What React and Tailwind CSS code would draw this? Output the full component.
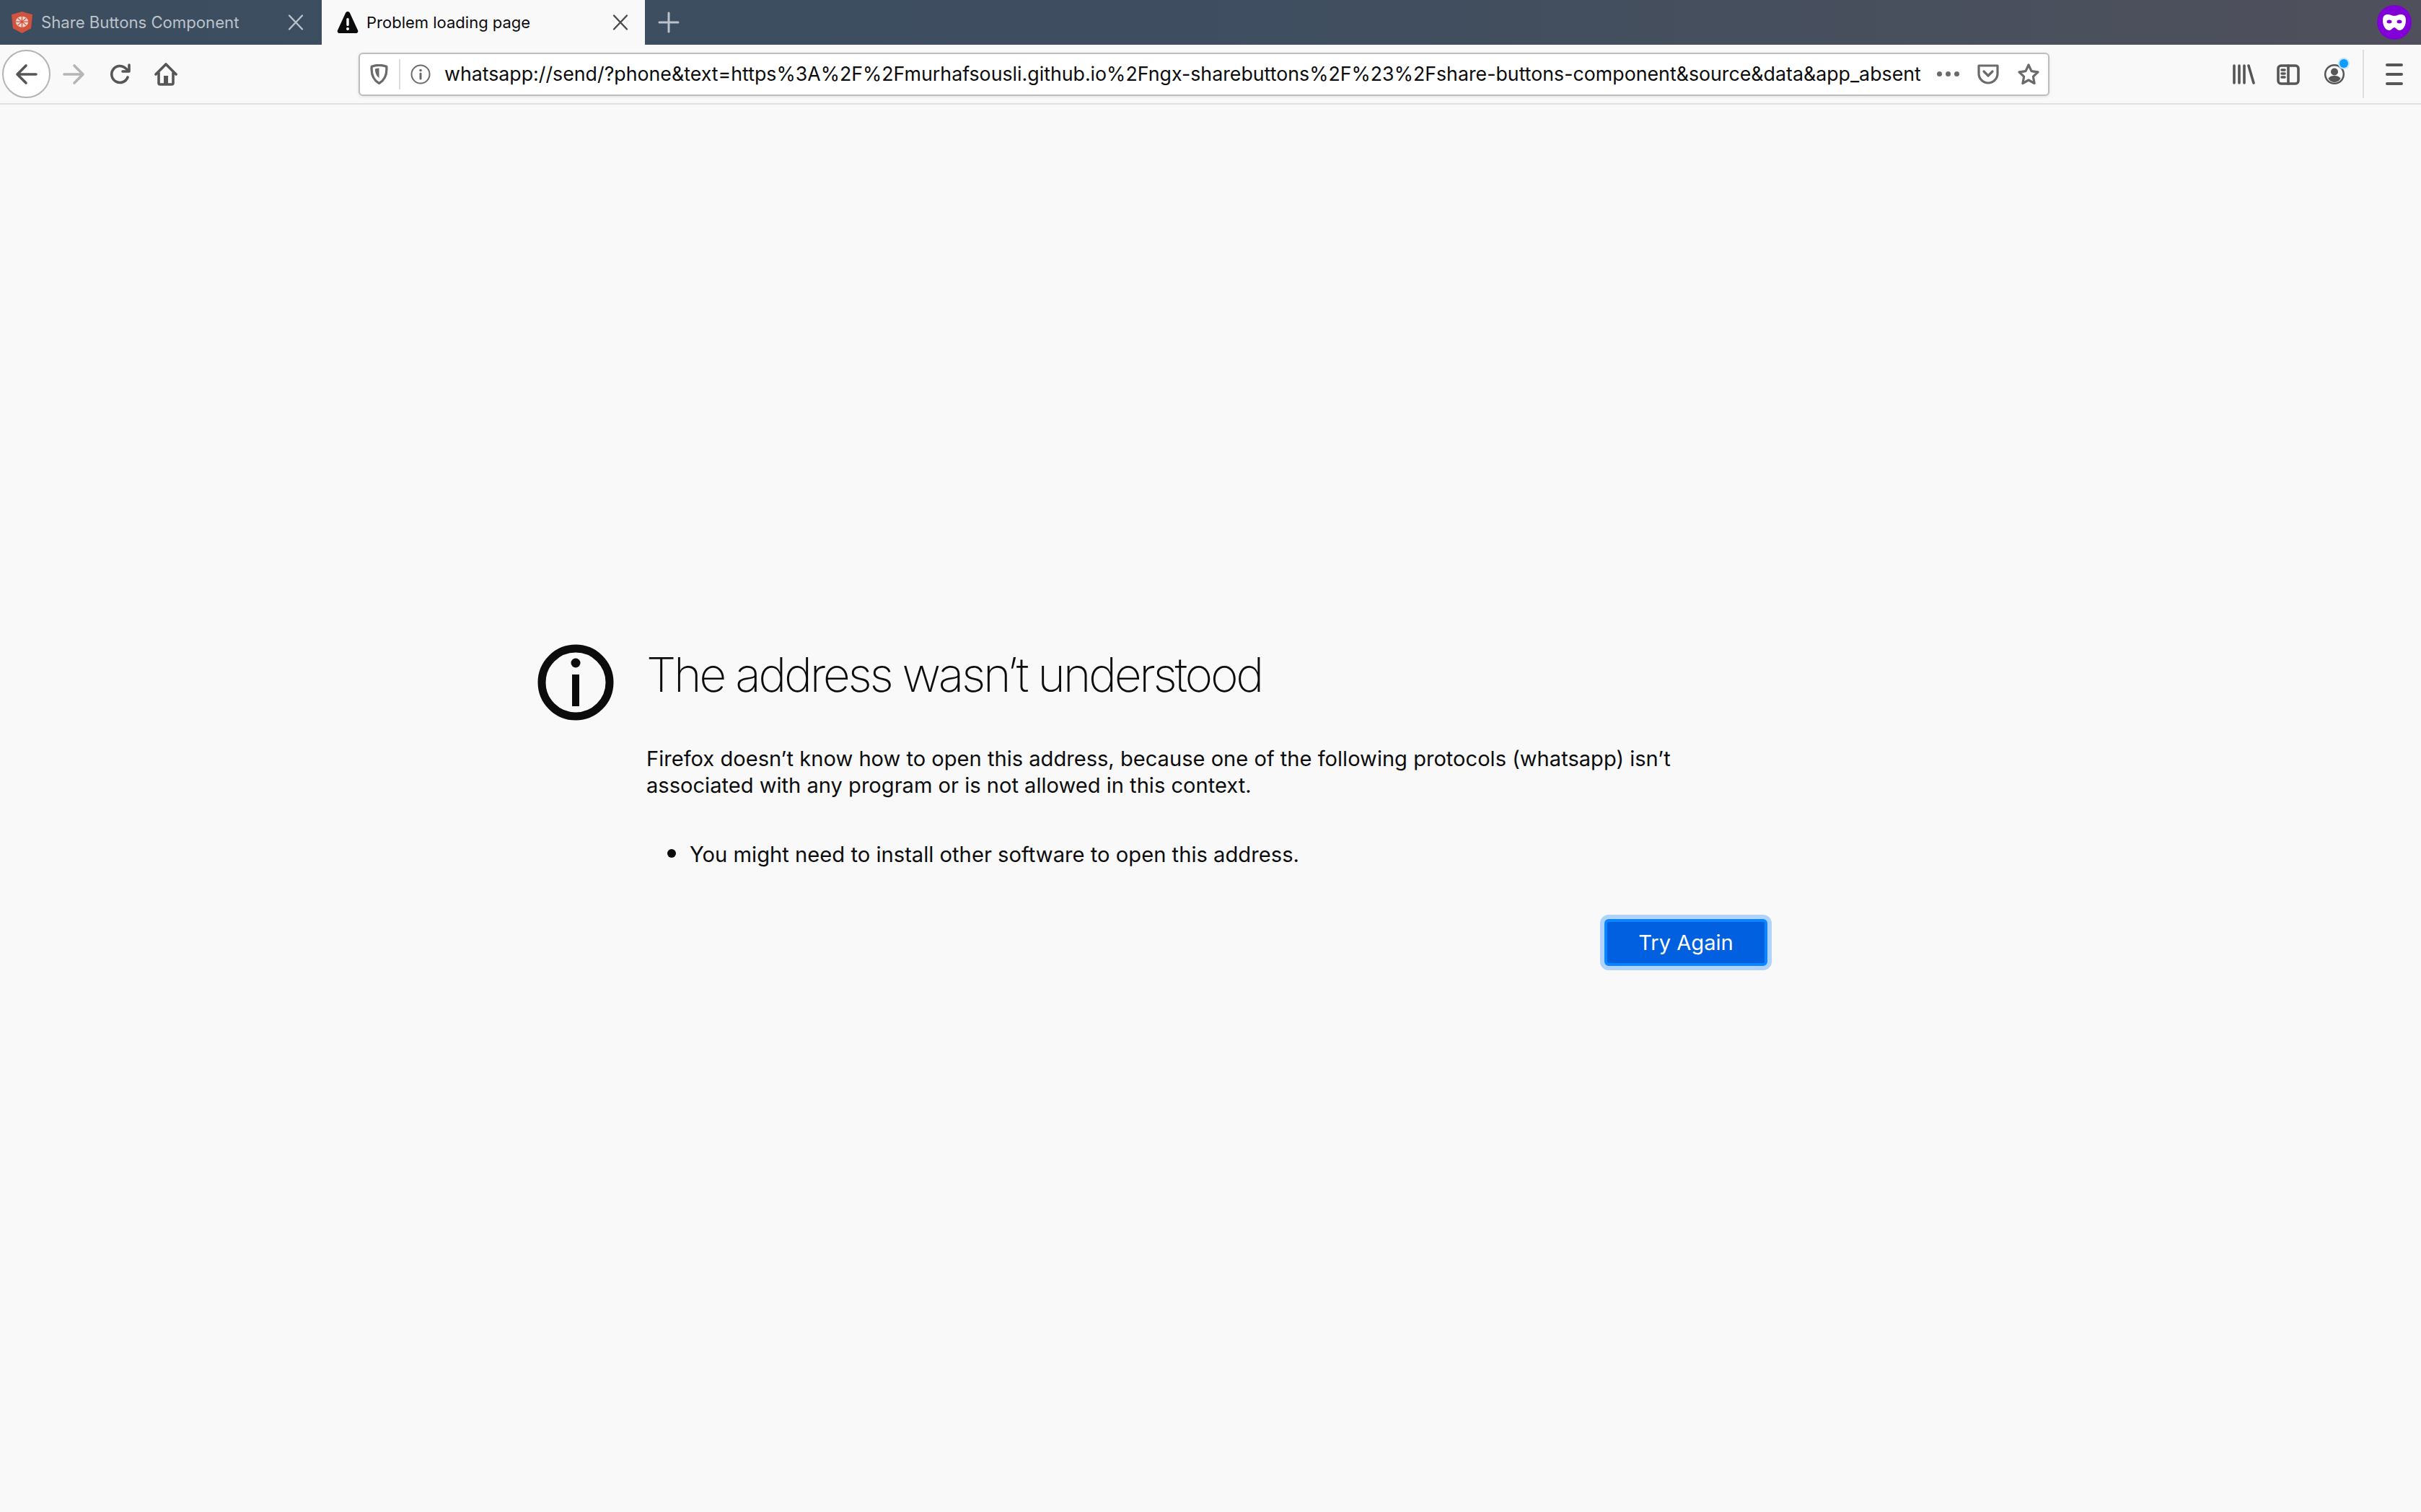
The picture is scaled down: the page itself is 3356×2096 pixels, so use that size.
const sans = 'font-["Inter","Liberation_Sans",sans-serif]';

function CloseIcon({ className = '' }) {
    return (
        <svg viewBox="0 0 24 24" className={`h-6 w-6 ${className}`} fill="none" stroke="currentColor" strokeWidth="2.4" strokeLinecap="round">
            <path d="M3 2.5 21 21.5M21 2.5 3 21.5" />
        </svg>
    );
}

function ToolIcon({ children, className = '', weight = '3.6' }) {
    return (
        <svg viewBox="0 0 32 32" className={`h-8 w-8 ${className}`} fill="none" stroke="currentColor" strokeWidth={weight} strokeLinecap="round" strokeLinejoin="round">
            {children}
        </svg>
    );
}

function TabBar() {
    return (
        <div className="flex h-[62px] bg-gradient-to-r from-[#3c4d60] via-[#3e4e60] to-[#4f505b]">
            <div className="flex w-[446px] items-center pl-[15px] pr-[24px] text-[#bcc2c9]">
                <svg viewBox="0 0 32 36" preserveAspectRatio="none" className="h-[30px] w-[31px]">
                    <path d="M16 0 31 5l-2 23-13 8-13-8L1 5z" fill="#d0533d" />
                    <circle cx="16" cy="17" r="9" fill="#f3d6cf" />
                    <path d="M7 17h18M16 8v18M10 11l12 12M22 11 10 23" stroke="#d0533d" strokeWidth="1.4" />
                </svg>
                <span className="ml-[11px] flex-1 text-[22.150px] leading-none">Share Buttons Component</span>
                <CloseIcon />
            </div>
            <div className="flex w-[448px] items-center bg-[#f9f9fa] pl-[20px] pr-[22px] text-[#0c0c0d]">
                <svg viewBox="0 0 32 32" className="h-[32px] w-[32px]">
                    <path d="M16 1c1.4 0 2.4.8 3 2l11 24c.9 2-.4 4-2.6 4H4.6C2.400 31 1.100 29 2 27L13 3c.6-1.200 1.600-2 3-2z" fill="#0c0c0d" />
                    <rect x="14.300" y="10" width="3.400" height="11" rx="1.500" fill="#fff" />
                    <circle cx="16" cy="25" r="2" fill="#fff" />
                </svg>
                <span className="ml-[10px] flex-1 text-[22px] leading-none">Problem loading page</span>
                <CloseIcon className="text-[#4a4a4f]" />
            </div>
            <div className="flex flex-1 items-center justify-between pl-[18px] pr-[13px]">
                <svg viewBox="0 0 30 30" className="h-[30px] w-[30px] text-[#bcc2c9]" fill="none" stroke="currentColor" strokeWidth="3" strokeLinecap="round">
                    <path d="M15 2v26M2 15h26" />
                </svg>
                <div className="flex h-12 w-12 items-center justify-center rounded-full bg-[#8000d7]">
                    <svg viewBox="0 0 32 22" className="w-[32px]">
                        <path d="M7 0c3 0 6 2 9 2s6-2 9-2c4 0 7 2 7 8 0 8-4 14-9 14-3 0-5-4-7-4s-4 4-7 4C4 22 0 16 0 8c0-6 3-8 7-8z" fill="#fff" />
                        <ellipse cx="9" cy="10" rx="3.500" ry="2.500" fill="#8000d7" />
                        <ellipse cx="23" cy="10" rx="3.500" ry="2.500" fill="#8000d7" />
                    </svg>
                </div>
            </div>
        </div>
    );
}

function UrlBar() {
    return (
        <div className="ml-[251px] flex h-[60px] w-[2344px] shrink-0 items-center rounded-[6px] border-2 border-[#bdbdbd] bg-white pl-[14px] pr-[11px] shadow-[0_1px_4px_rgba(0,0,0,0.1)]">
            <svg viewBox="0 0 26 30" className="h-[28px] w-[25px] text-[#6a6a6a]">
                <path d="M13 1.500c4 0 8 .8 11 2 .8 9-1 19-11 25C3 22.500 1.200 12.500 2 3.500c3-1.200 7-2 11-2z" fill="none" stroke="currentColor" strokeWidth="3.500" strokeLinejoin="round" />
                <path d="M13 6c-2 0-4 .3-6 1 0 5 1.500 10 6 13.500z" fill="currentColor" />
            </svg>
            <div className="ml-[15px] h-[42px] w-[2px] bg-[#dcdcdc]" />
            <svg viewBox="0 0 28 28" className="ml-[14px] h-[28px] w-[28px] text-[#6a6a6a]" fill="none" stroke="currentColor">
                <circle cx="14" cy="14" r="12.500" strokeWidth="2" />
                <path d="M14 13v7" strokeWidth="3" strokeLinecap="round" />
                <circle cx="14" cy="8.500" r="1.800" fill="currentColor" stroke="none" />
            </svg>
            <span className="ml-[19px] flex-1 whitespace-nowrap text-[26.750px] leading-none text-[#0c0c0d]">
                whatsapp://send/?phone&amp;text=https%3A%2F%2Fmurhafsousli.github.io%2Fngx-sharebuttons%2F%23%2Fshare-buttons-component&amp;source&amp;data&amp;app_absent
            </span>
            <div className="flex gap-[5px]">
                <span className="h-[7px] w-[7px] rounded-full bg-[#6a6a6a]" />
                <span className="h-[7px] w-[7px] rounded-full bg-[#6a6a6a]" />
                <span className="h-[7px] w-[7px] rounded-full bg-[#6a6a6a]" />
            </div>
            <ToolIcon weight="3.200" className="ml-[24px] text-[#6a6a6a]">
                <path d="M3 4h26v11c0 7-6 13-13 13S3 22 3 15z" />
                <path d="m10 12 6 6 6-6" />
            </ToolIcon>
            <ToolIcon weight="3.200" className="ml-[24px] text-[#6a6a6a]">
                <path d="m16 3 4 8.600 9 1.200-6.600 6.400 1.700 9.300L16 24l-8.100 4.500 1.700-9.300L3 12.800l9-1.200z" />
            </ToolIcon>
        </div>
    );
}

function Toolbar() {
    return (
        <div className="flex h-[83px] items-center border-b-2 border-[#e1e1e2] bg-[#f9f9fa] pl-[3px] text-[#565656]">
            <div className="flex h-[67px] w-[67px] items-center justify-center rounded-full border-2 border-[#b4b4b4] bg-white">
                <ToolIcon>
                    <path d="M29 16H3M15 4 3 16l12 12" />
                </ToolIcon>
            </div>
            <ToolIcon className="ml-[16px] text-[#b5b5b5]">
                <path d="M3 16h26M17 4l12 12-12 12" />
            </ToolIcon>
            <ToolIcon className="ml-[32px]">
                <path d="M27 20a11.500 11.500 0 1 1-3-12.500L28 11" />
                <path d="M29 3v9h-9" />
            </ToolIcon>
            <ToolIcon className="ml-[32px]">
                <path d="M2 16 16 2l14 14" />
                <path d="M6 14v14c0 1 .5 2 2 2h16c1.500 0 2-1 2-2V14" />
                <rect x="13" y="18" width="6" height="11" fill="currentColor" stroke="none" />
            </ToolIcon>
            <UrlBar />
            <div className="ml-[253px] flex items-center">
                <ToolIcon>
                    <path d="M3 4v24M10 4v24M17 4v24M23 4l7 24" />
                </ToolIcon>
                <ToolIcon className="ml-[30px]">
                    <rect x="2" y="4" width="28" height="25" rx="4" />
                    <path d="M16 4v25M7 10h4M7 15h4M7 20h4" />
                </ToolIcon>
                <div className="relative ml-[32px] h-8 w-8">
                    <svg viewBox="0 0 32 32" className="h-8 w-8">
                        <circle cx="16" cy="16" r="12.800" fill="none" stroke="currentColor" strokeWidth="2.500" />
                        <circle cx="16" cy="12.500" r="5" fill="currentColor" />
                        <path d="M7.500 22c2-3.500 5-4 8.500-4s6.500.5 8.500 4c-2 3.500-5 5-8.500 5s-6.500-1.500-8.500-5z" fill="currentColor" />
                    </svg>
                    <span className="absolute right-[-3px] top-[-5px] h-[12px] w-[12px] rounded-full bg-[#0a9dff] shadow-[0_0_0_2px_#bfe6ff]" />
                </div>
                <div className="ml-[23px] h-[67px] w-[2px] bg-[#dedede]" />
                <div className="ml-[30px] flex w-[24px] flex-col gap-[9px]">
                    <span className="h-[4px] rounded-full bg-[#565656]" />
                    <span className="h-[4px] rounded-full bg-[#565656]" />
                    <span className="h-[4px] rounded-full bg-[#565656]" />
                </div>
            </div>
        </div>
    );
}

function ErrorPage() {
    return (
        <div className="flex flex-1 justify-start bg-[#f9f9fa] pl-[745px] pt-[748px] text-[#0c0c0d]">
            <svg viewBox="0 0 106 106" className="h-[106px] w-[106px] shrink-0">
                <circle cx="53" cy="53" r="47" fill="none" stroke="#0c0c0d" strokeWidth="11" />
                <circle cx="53" cy="26" r="6.500" fill="#0c0c0d" />
                <rect x="48" y="42" width="10" height="44" fill="#0c0c0d" />
            </svg>
            <div className="ml-[45px] flex w-[1556px] flex-col">
                <h1 className="pt-[2px] text-[66px] font-extralight leading-[80px] tracking-[-3.350px]">The address wasn’t understood</h1>
                <p className="mt-[58px] w-[1470px] text-[29.100px] leading-[37px]">
                    Firefox doesn’t know how to open this address, because one of the following protocols (whatsapp) isn’t associated with any program or is not allowed in this context.
                </p>
                <ul className="mt-[56px] list-disc pl-[60px] text-[29.200px] leading-[37px] marker:text-[38px]">
                    <li>You might need to install other software to open this address.</li>
                </ul>
                <div className="mt-[71px] flex justify-end pr-[2px]">
                    <button className="h-[65px] w-[226px] rounded-[6px] border-[4px] border-[#0a84ff] bg-[#0060df] text-[29.100px] leading-none text-white shadow-[0_0_0_6px_#afd4fc]">
                        Try Again
                    </button>
                </div>
            </div>
        </div>
    );
}

export default function App() {
    return (
        <div className={`flex h-[2096px] w-[3356px] flex-col overflow-hidden bg-[#f9f9fa] ${sans}`}>
            <TabBar />
            <Toolbar />
            <ErrorPage />
        </div>
    );
}
